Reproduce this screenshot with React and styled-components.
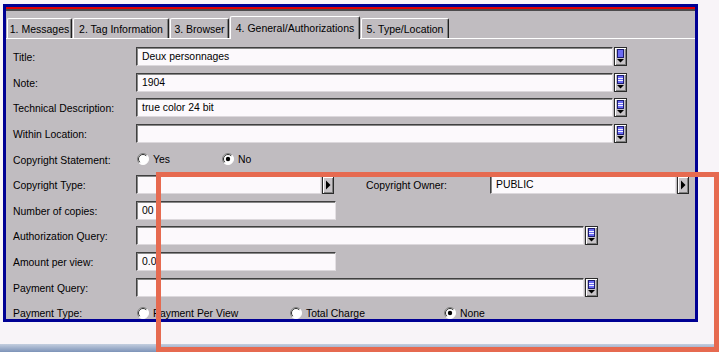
import React from 'react'
import styled, { createGlobalStyle } from 'styled-components'

const GlobalStyle = createGlobalStyle`
  html, body {
    margin: 0;
    padding: 0;
    background: #f8f4f8;
  }
`

const tabs = [
  { label: '1. Messages', width: 65 },
  { label: '2. Tag Information', width: 96 },
  { label: '3. Browser', width: 59 },
  { label: '4. General/Authorizations', width: 130, active: true },
  { label: '5. Type/Location', width: 88 },
]

function ListButton({ lines = true }) {
  return (
    <ButtonBox>
      <svg width="11" height="17" viewBox="0 0 11 17">
        <rect x="2.5" y="1.5" width="6" height="8" fill="#6c6cf4" stroke="#1c1c70" />
        {lines && (
          <g stroke="#f4f4ff" strokeWidth="1">
            <line x1="3" y1="4.5" x2="8" y2="4.5" />
            <line x1="3" y1="6.5" x2="8" y2="6.5" />
          </g>
        )}
        <polygon points="2,11 9,11 5.5,14.5" fill="#000" />
      </svg>
    </ButtonBox>
  )
}

function ArrowButton() {
  return (
    <ArrowBox>
      <svg width="10" height="16" viewBox="0 0 10 16">
        <polygon points="3,3.5 7.5,8 3,12.5" fill="#000" />
      </svg>
    </ArrowBox>
  )
}

function Radio({ checked }) {
  return (
    <svg width="12" height="12" viewBox="0 0 12 12">
      <circle cx="6" cy="6" r="5.5" fill="#fff" />
      <path d="M2.1 9.9 A5.5 5.5 0 0 1 9.9 2.1" fill="none" stroke="#808080" />
      <path d="M9.9 2.1 A5.5 5.5 0 0 1 2.1 9.9" fill="none" stroke="#fff" />
      <path d="M2.8 9.2 A4.5 4.5 0 0 1 9.2 2.8" fill="none" stroke="#303030" />
      {checked && <circle cx="6" cy="6" r="2.2" fill="#000" />}
    </svg>
  )
}

function RadioGroup({ options }) {
  return (
    <Options>
      {options.map((o) => (
        <Option key={o.label} $width={o.width}>
          <Radio checked={o.checked} />
          <span>{o.label}</span>
        </Option>
      ))}
    </Options>
  )
}

function App() {
  return (
    <Page>
      <GlobalStyle />
      <Window>
        <Stripe />
        <TabBar>
          {tabs.map((t) => (
            <Tab key={t.label} $width={t.width} $active={t.active}>
              {t.label}
            </Tab>
          ))}
        </TabBar>
        <Panel>
          <Row>
            <Label>Title:</Label>
            <Field $width={477}>Deux personnages</Field>
            <ListButton lines={false} />
          </Row>
          <Row>
            <Label>Note:</Label>
            <Field $width={477}>1904</Field>
            <ListButton />
          </Row>
          <Row>
            <Label>Technical Description:</Label>
            <Field $width={477}>true color 24 bit</Field>
            <ListButton />
          </Row>
          <Row>
            <Label>Within Location:</Label>
            <Field $width={477} />
            <ListButton />
          </Row>
          <Row>
            <Label>Copyright Statement:</Label>
            <RadioGroup
              options={[
                { label: 'Yes', width: 85 },
                { label: 'No', width: 60, checked: true },
              ]}
            />
          </Row>
          <Row>
            <Label>Copyright Type:</Label>
            <Field $width={185} />
            <ArrowButton />
            <Label $width={124} $gap={32}>Copyright Owner:</Label>
            <Field $width={186}>PUBLIC</Field>
            <ArrowButton />
          </Row>
          <Row>
            <Label>Number of copies:</Label>
            <Field $width={200}>00</Field>
          </Row>
          <Row>
            <Label>Authorization Query:</Label>
            <Field $width={448} />
            <ListButton />
          </Row>
          <Row>
            <Label>Amount per view:</Label>
            <Field $width={200}>0.0</Field>
          </Row>
          <Row>
            <Label>Payment Query:</Label>
            <Field $width={448} />
            <ListButton />
          </Row>
          <Row>
            <Label>Payment Type:</Label>
            <RadioGroup
              options={[
                { label: 'Payment Per View', width: 153 },
                { label: 'Total Charge', width: 154 },
                { label: 'None', width: 80, checked: true },
              ]}
            />
          </Row>
        </Panel>
      </Window>
      <Taskbar />
      <Highlight />
    </Page>
  )
}

const Page = styled.div`
  position: relative;
  width: 719px;
  height: 352px;
  overflow: hidden;
  display: flex;
  flex-direction: column;
  justify-content: space-between;
  padding: 4px 0 0 3px;
  box-sizing: border-box;
  font-family: "Liberation Sans", Arial, sans-serif;
  font-size: 10.4px;
  color: #000;
`

const Window = styled.div`
  width: 695px;
  height: 318px;
  flex-shrink: 0;
  box-sizing: border-box;
  border: 3px solid #000094;
  background: #c0bcc0;
  display: flex;
  flex-direction: column;
  overflow: hidden;
`

const Stripe = styled.div`
  height: 2px;
  flex-shrink: 0;
  background: #e00000;
  border-bottom: 2px solid #4c4a4c;
`

const TabBar = styled.div`
  height: 27px;
  flex-shrink: 0;
  display: flex;
  align-items: flex-end;
  gap: 1px;
  padding-left: 1px;
  position: relative;
  z-index: 1;
`

const Tab = styled.div`
  width: ${(p) => p.$width}px;
  height: ${(p) => (p.$active ? 23 : 20)}px;
  margin-bottom: ${(p) => (p.$active ? -1 : 0)}px;
  box-sizing: border-box;
  display: flex;
  align-items: center;
  justify-content: center;
  padding-top: ${(p) => (p.$active ? 0 : 1)}px;
  background: #c0bcc0;
  border-top: 1px solid #fff;
  border-left: 1px solid #fff;
  border-right: 1px solid #202020;
  border-radius: 2px 2px 0 0;
  box-shadow: inset -1px 0 #808080;
  font-size: 10.5px;
  white-space: nowrap;
`

const Panel = styled.div`
  flex: 1;
  min-height: 0;
  overflow: hidden;
  border-top: 1px solid #fff;
  padding: 5px 0 0 7px;
  display: flex;
  flex-direction: column;
`

const Row = styled.div`
  height: 25.6px;
  flex-shrink: 0;
  display: flex;
  align-items: center;
`

const Label = styled.div`
  width: ${(p) => p.$width || 123}px;
  margin-left: ${(p) => p.$gap || 0}px;
  padding-top: 2px;
  flex-shrink: 0;
  white-space: nowrap;
`

const Field = styled.div`
  width: ${(p) => p.$width}px;
  height: 19px;
  box-sizing: border-box;
  flex-shrink: 0;
  background: #fcf9fc;
  border: 1px solid;
  border-color: #404040 #e4e0e4 #dcd8dc #404040;
  box-shadow: inset 1px 1px #888;
  padding: 1px 0 0 5px;
  line-height: 16px;
  white-space: nowrap;
  overflow: hidden;
`

const ButtonBox = styled.div`
  width: 13px;
  height: 19px;
  flex-shrink: 0;
  margin-left: 1px;
  box-sizing: border-box;
  border: 1px solid #2a2a2a;
  background: #c8c4c8;
  box-shadow: inset 1px 1px #fff, inset -1px -1px #808080;
  display: flex;
`

const ArrowBox = styled(ButtonBox)`
  width: 12px;
  height: 18px;
`

const Options = styled.div`
  display: flex;
  align-items: center;
  padding-left: 1px;
`

const Option = styled.div`
  width: ${(p) => p.$width}px;
  display: flex;
  align-items: center;
  gap: 4px;

  span {
    padding-top: 1px;
  }
`

const Taskbar = styled.div`
  height: 8px;
  flex-shrink: 0;
  margin-left: -3px;
  background: linear-gradient(#c4cedf, #7d93b8);
`

const Highlight = styled.div`
  position: absolute;
  left: 156px;
  top: 172px;
  width: 563px;
  height: 180px;
  box-sizing: border-box;
  border: 5px solid #e66a50;
  pointer-events: none;
`

export default App
